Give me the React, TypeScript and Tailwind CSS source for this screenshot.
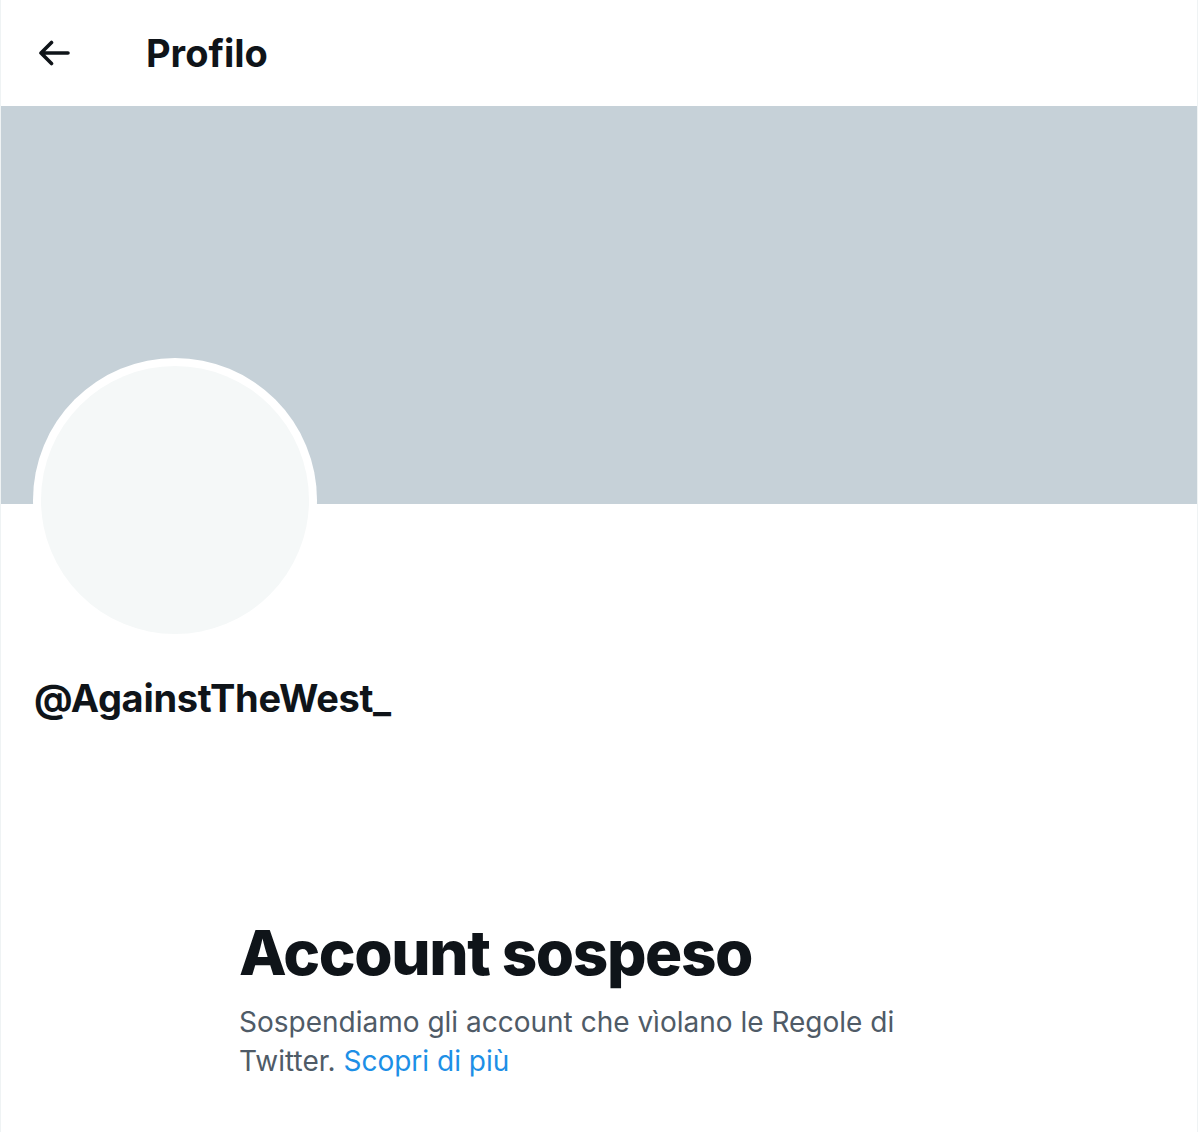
import React from "react";

function BackArrow() {
  return (
    <svg width="32" height="26" viewBox="0 0 32 26" fill="none" aria-hidden="true">
      <path
        d="M30 13H3M13.5 2.5L3 13l10.5 10.5"
        stroke="#0f1419"
        strokeWidth="3.6"
        strokeLinecap="round"
        strokeLinejoin="round"
      />
    </svg>
  );
}

export default function App() {
  return (
    <div
      className="w-full min-h-[1132px] bg-white border-x border-[#eff3f4] text-[#0f1419]"
      style={{ fontFamily: "Inter, 'Liberation Sans', sans-serif" }}
    >
      {/* Header */}
      <header className="h-[106px] flex items-center">
        <div className="w-[145px] pl-[37px] flex items-center">
          <BackArrow />
        </div>
        <h1 className="text-[38px] font-bold">Profilo</h1>
      </header>

      {/* Banner */}
      <div className="h-[398px] bg-[#c6d1d8]" />

      {/* Avatar */}
      <div className="ml-[32px] -mt-[146px] w-[284px] h-[284px] rounded-full bg-white p-[8px] relative">
        <div className="w-full h-full rounded-full bg-[#f5f8f8]" />
      </div>

      {/* Handle */}
      <div className="pl-[33px] mt-[33px] text-[38px] leading-[46px] font-bold tracking-[-0.3px]">
        @AgainstTheWest_
      </div>

      {/* Empty state */}
      <div className="ml-[238px] mt-[196px] w-[680px]">
        <h2 className="text-[62px] leading-[72px] font-extrabold tracking-[-1.4px]">
          Account sospeso
        </h2>
        <p className="mt-[14px] text-[28px] leading-[39px] text-[#4f5b67]">
          Sospendiamo gli account che vìolano le Regole di Twitter.{" "}
          <a href="#" className="text-[#1d8fe6]">
            Scopri di più
          </a>
        </p>
      </div>
    </div>
  );
}
